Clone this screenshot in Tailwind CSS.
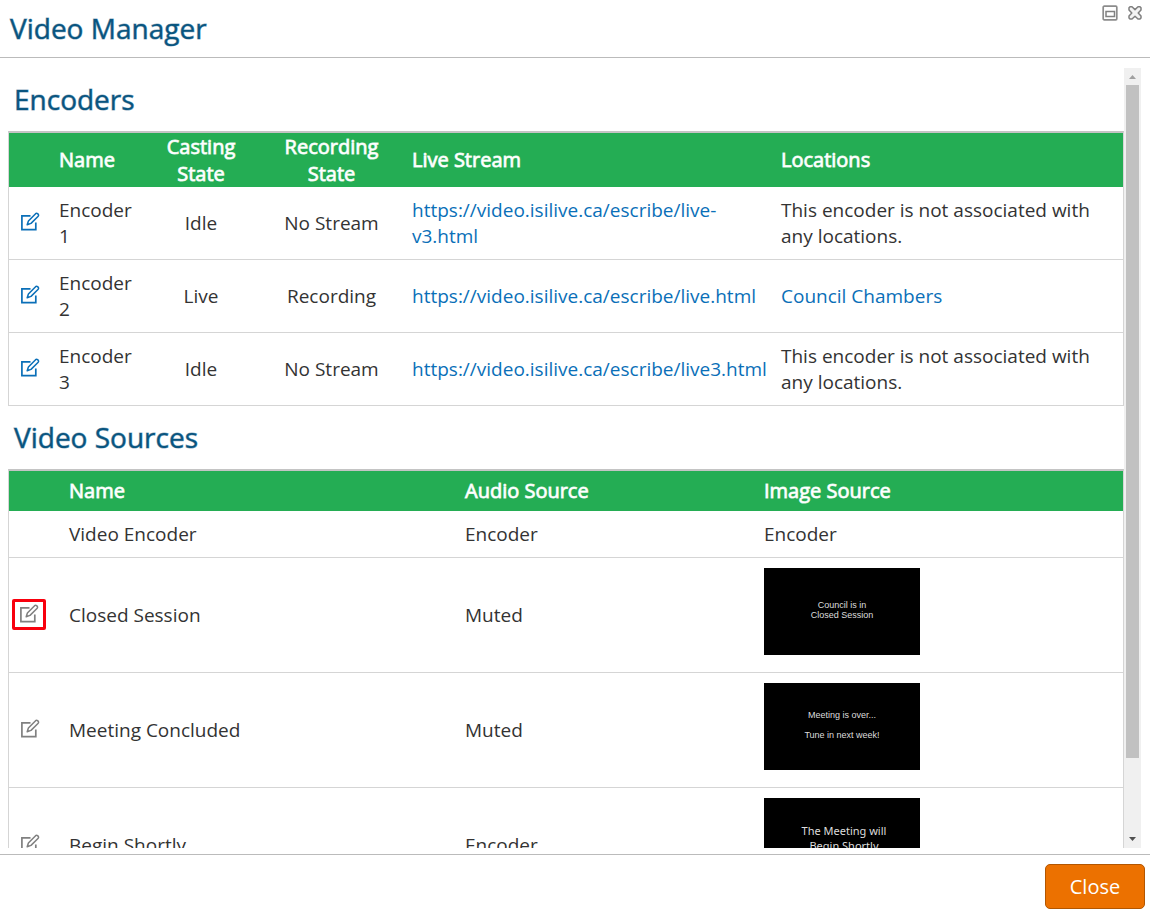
<!DOCTYPE html>
<html lang="en">
<head>
    <meta charset="UTF-8">
    <meta name="viewport" content="width=device-width, initial-scale=1.0">
    <title>Video Manager</title>
    <script src="https://cdn.jsdelivr.net/npm/@tailwindcss/browser@4"></script>
</head>
<body class="bg-white font-['Open_Sans',sans-serif] text-[19px] leading-[26px] text-[#333]">
    <!-- Shared icons -->
    <svg class="hidden">
        <symbol id="edit" viewBox="0 0 20 20">
            <path d="M10.5 3.800H1.900V17.700H15.800V10.500" fill="none" stroke="currentColor" stroke-width="1.7"/>
            <path d="M7.200 12.700L8.400 9L15.600 1.700Q16.600 .9 17.900 1.900Q19 3 18.200 4.200L11 11.400Z" fill="none" stroke="currentColor" stroke-width="1.500" stroke-linejoin="round"/>
        </symbol>
    </svg>

    <div class="flex flex-col h-screen">
        <header class="flex justify-between shrink-0 h-[58px] border-b border-[#bbb] pl-[10px] pr-[7px]">
            <h1 class="text-[28px] leading-[56px] text-[#09557f] [-webkit-text-stroke:1px_#09557f80]">Video Manager</h1>
            <div class="flex gap-[9px] pt-[5px]">
                <button type="button" class="size-4" aria-label="Maximize">
                    <svg class="size-4" viewBox="0 0 16 16" fill="none" stroke="#808080">
                        <rect x="1.200" y="1.200" width="13.600" height="13.600" rx="1" stroke="#8c8c8c" stroke-width="1.700"/>
                        <rect x="4" y="6.500" width="8.500" height="5" stroke-width="1.500"/>
                    </svg>
                </button>
                <button type="button" class="size-4" aria-label="Close dialog">
                    <svg class="size-4" viewBox="0 0 16 16" fill="#f4f4f4" stroke="#808080" stroke-width="1.500" stroke-linejoin="round">
                        <path d="M3 1.800H5L8 4.600L11 1.800H13L14 2.800V5L11.200 8L14 11V13L13 14H11L8 11.200L5 14H3L2 13V11L4.800 8L2 5V2.800Z"/>
                    </svg>
                </button>
            </div>
        </header>

        <main class="flex flex-1 min-h-0 pt-[10px] pb-[6px] pl-2 pr-[9px]">
            <div class="flex-1 overflow-y-auto [scrollbar-width:none]">
                <h2 class="h-[63px] pl-[6px] text-[28px] leading-[63px] text-[#09557f] [-webkit-text-stroke:1px_#09557f80]">Encoders</h2>
                <table class="w-full table-fixed border-separate border-spacing-0 border border-t-2 border-b-0 border-[#d5d5d5] border-t-[#c4c4c4]">
                    <colgroup>
                        <col class="w-[40px]"><col class="w-[92px]"><col class="w-[120px]"><col class="w-[141px]"><col class="w-[369px]"><col>
                    </colgroup>
                    <thead class="bg-[#24ad54] text-white text-[20px] leading-[27px] [-webkit-text-stroke:1px_#ffffffcc]">
                        <tr class="h-[54px]">
                            <td></td>
                            <th class="pl-[10px] pb-[2px] text-left font-normal">Name</th>
                            <th class="px-[10px] font-normal">Casting State</th>
                            <th class="px-[10px] font-normal">Recording State</th>
                            <th class="pl-[10px] pb-[2px] text-left font-normal">Live Stream</th>
                            <th class="pl-[10px] pb-[2px] text-left font-normal">Locations</th>
                        </tr>
                    </thead>
                    <tbody>
                        <tr class="h-[73px]">
                            <td class="border-b border-[#d5d5d5] pl-[11px] pb-[2px]"><button type="button" class="block size-5 text-[#0a6fb8]" aria-label="Edit Encoder 1"><svg class="size-5"><use href="#edit"/></svg></button></td>
                            <td class="border-b border-[#d5d5d5] pl-[10px]">Encoder 1</td>
                            <td class="border-b border-[#d5d5d5] text-center">Idle</td>
                            <td class="border-b border-[#d5d5d5] text-center">No Stream</td>
                            <td class="border-b border-[#d5d5d5] pl-[10px]"><a href="#" class="text-[#0a6fb8]">https://video.isilive.ca/escribe/live-v3.html</a></td>
                            <td class="border-b border-[#d5d5d5] px-[10px]">This encoder is not associated with any locations.</td>
                        </tr>
                        <tr class="h-[73px]">
                            <td class="border-b border-[#d5d5d5] pl-[11px] pb-[2px]"><button type="button" class="block size-5 text-[#0a6fb8]" aria-label="Edit Encoder 2"><svg class="size-5"><use href="#edit"/></svg></button></td>
                            <td class="border-b border-[#d5d5d5] pl-[10px]">Encoder 2</td>
                            <td class="border-b border-[#d5d5d5] text-center">Live</td>
                            <td class="border-b border-[#d5d5d5] text-center">Recording</td>
                            <td class="border-b border-[#d5d5d5] pl-[10px]"><a href="#" class="text-[#0a6fb8]">https://video.isilive.ca/escribe/live.html</a></td>
                            <td class="border-b border-[#d5d5d5] px-[10px]"><a href="#" class="text-[#0a6fb8]">Council Chambers</a></td>
                        </tr>
                        <tr class="h-[73px]">
                            <td class="border-b border-[#d5d5d5] pl-[11px] pb-[2px]"><button type="button" class="block size-5 text-[#0a6fb8]" aria-label="Edit Encoder 3"><svg class="size-5"><use href="#edit"/></svg></button></td>
                            <td class="border-b border-[#d5d5d5] pl-[10px]">Encoder 3</td>
                            <td class="border-b border-[#d5d5d5] text-center">Idle</td>
                            <td class="border-b border-[#d5d5d5] text-center">No Stream</td>
                            <td class="border-b border-[#d5d5d5] pl-[10px]"><a href="#" class="text-[#0a6fb8]">https://video.isilive.ca/escribe/live3.html</a></td>
                            <td class="border-b border-[#d5d5d5] px-[10px]">This encoder is not associated with any locations.</td>
                        </tr>
                    </tbody>
                </table>

                <h2 class="h-[63px] pl-[6px] text-[28px] leading-[63px] text-[#09557f] [-webkit-text-stroke:1px_#09557f80]">Video Sources</h2>
                <table class="w-full table-fixed border-separate border-spacing-0 border border-t-2 border-[#d5d5d5] border-t-[#c4c4c4]">
                    <colgroup>
                        <col class="w-[50px]"><col class="w-[396px]"><col class="w-[299px]"><col>
                    </colgroup>
                    <thead class="bg-[#24ad54] text-white text-[20px] leading-[27px] [-webkit-text-stroke:1px_#ffffffcc]">
                        <tr class="h-[40px]">
                            <td></td>
                            <th class="pl-[10px] pb-[2px] text-left font-normal">Name</th>
                            <th class="pl-[10px] pb-[2px] text-left font-normal">Audio Source</th>
                            <th class="pl-[10px] pb-[2px] text-left font-normal">Image Source</th>
                        </tr>
                    </thead>
                    <tbody>
                        <tr class="h-[47px]">
                            <td class="border-b border-[#d5d5d5]"></td>
                            <td class="border-b border-[#d5d5d5] pl-[10px]">Video Encoder</td>
                            <td class="border-b border-[#d5d5d5] pl-[10px]">Encoder</td>
                            <td class="border-b border-[#d5d5d5] pl-[10px]">Encoder</td>
                        </tr>
                        <tr class="h-[115px]">
                            <td class="border-b border-[#d5d5d5] pl-[3px] pb-[2px]"><button type="button" class="flex items-center justify-center w-[34px] h-[31px] rounded-[2px] border-3 border-[#f8000d] text-[#808080]" aria-label="Edit Closed Session"><svg class="size-5"><use href="#edit"/></svg></button></td>
                            <td class="border-b border-[#d5d5d5] pl-[10px]">Closed Session</td>
                            <td class="border-b border-[#d5d5d5] pl-[10px]">Muted</td>
                            <td class="border-b border-[#d5d5d5] pl-[10px] pt-[10px] align-top">
                                <div class="flex flex-col justify-center w-[156px] h-[87px] pb-1 bg-black text-center text-[#ddd] font-['Liberation_Sans',sans-serif] text-[9px] leading-[10px]">
                                    <p>Council is in</p>
                                    <p>Closed Session</p>
                                </div>
                            </td>
                        </tr>
                        <tr class="h-[115px]">
                            <td class="border-b border-[#d5d5d5] pl-[11px] pb-[2px]"><button type="button" class="block size-5 text-[#808080]" aria-label="Edit Meeting Concluded"><svg class="size-5"><use href="#edit"/></svg></button></td>
                            <td class="border-b border-[#d5d5d5] pl-[10px]">Meeting Concluded</td>
                            <td class="border-b border-[#d5d5d5] pl-[10px]">Muted</td>
                            <td class="border-b border-[#d5d5d5] pl-[10px] pt-[10px] align-top">
                                <div class="flex flex-col justify-center gap-[10px] w-[156px] h-[87px] pb-1 bg-black text-center text-[#ddd] font-['Liberation_Sans',sans-serif] text-[9px] leading-[10px]">
                                    <p>Meeting is over...</p>
                                    <p>Tune in next week!</p>
                                </div>
                            </td>
                        </tr>
                        <tr class="h-[115px]">
                            <td class="border-b border-[#d5d5d5] pl-[11px] pb-[2px]"><button type="button" class="block size-5 text-[#808080]" aria-label="Edit Begin Shortly"><svg class="size-5"><use href="#edit"/></svg></button></td>
                            <td class="border-b border-[#d5d5d5] pl-[10px]">Begin Shortly</td>
                            <td class="border-b border-[#d5d5d5] pl-[10px]">Encoder</td>
                            <td class="border-b border-[#d5d5d5] pl-[10px] pt-[10px] align-top">
                                <div class="flex flex-col justify-center w-[156px] h-[87px] pb-2 pl-1 bg-black text-center text-[#ddd] font-['Noto_Sans',sans-serif] text-[11px] leading-[15px]">
                                    <p>The Meeting will</p>
                                    <p>Begin Shortly</p>
                                </div>
                            </td>
                        </tr>
                    </tbody>
                </table>
            </div>

            <!-- Scrollbar -->
            <div class="flex flex-col items-center w-[17px] bg-[#f0f0f0]" aria-hidden="true">
                <svg class="w-[17px] h-[17px] shrink-0" viewBox="0 0 17 17"><path d="M5 11L8.500 7L12 11Z" fill="#a0a0a0"/></svg>
                <div class="flex flex-col flex-1 w-full px-[2px]">
                    <div class="flex-[673] bg-[#c1c1c1]"></div>
                    <div class="flex-[73]"></div>
                </div>
                <svg class="w-[17px] h-[17px] shrink-0" viewBox="0 0 17 17"><path d="M5 6L8.500 10L12 6Z" fill="#505050"/></svg>
            </div>
        </main>

        <footer class="flex justify-end shrink-0 h-[63px] border-t border-[#bbb] pt-[9px] pr-[5px]">
            <button type="button" class="w-[100px] h-[45px] rounded-[5px] border border-[#b35600] bg-[#ec7100] text-white text-[20px]">Close</button>
        </footer>
    </div>
</body>
</html>
